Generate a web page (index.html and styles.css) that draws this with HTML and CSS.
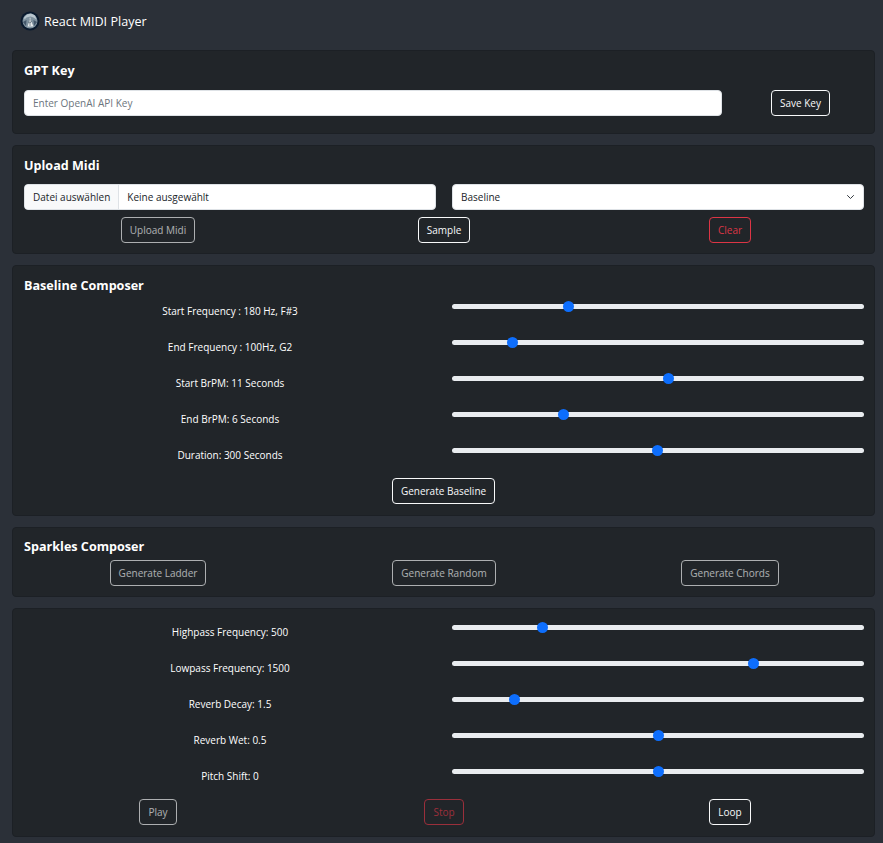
FILE: index.html
```html
<!DOCTYPE html>
<html lang="en">
<head>
    <meta charset="UTF-8">
    <title>React MIDI Player</title>
    <link rel="stylesheet" href="styles.css">
</head>
<body>
<nav class="navbar">
    <svg class="logo" width="20" height="20" viewBox="0 0 20 20">
        <circle cx="10" cy="10" r="9.500" fill="#0a1a2e"/>
        <circle cx="10" cy="10" r="7.500" fill="#7f929f"/>
        <path d="M4 6.500l3-3 4-1 4 2 1.500 4-3-2-3-1-4 1-2 2z" fill="#b9c6ce"/>
        <path d="M10 6l1.500 5 2 4.500h-6l1.500-4.500z" fill="#e6eaec"/>
        <path d="M3 11l3.500-2-.5 6zM17 11l-3.500-2 .5 6z" fill="#44576a"/>
        <path d="M10 8v7M8 11l2 1 2-2" stroke="#5c6d7a" stroke-width=".7" fill="none"/>
    </svg>
    <span>React MIDI Player</span>
</nav>
<main class="page">
    <section class="card">
        <h2>GPT Key</h2>
        <div class="key-row">
            <input class="field" type="text" placeholder="Enter OpenAI API Key">
            <button class="btn">Save Key</button>
        </div>
    </section>

    <section class="card upload">
        <h2>Upload Midi</h2>
        <div class="two-col">
            <div class="file-field">
                <span class="file-btn">Datei auswählen</span>
                <span class="file-name">Keine ausgewählt</span>
            </div>
            <select class="field select">
                <option>Baseline</option>
            </select>
        </div>
        <div class="actions spaced">
            <button class="btn muted">Upload Midi</button>
            <button class="btn">Sample</button>
            <button class="btn danger">Clear</button>
        </div>
    </section>

    <section class="card">
        <h2>Baseline Composer</h2>
        <div class="sliders">
            <div class="slider-row"><label>Start Frequency : 180 Hz, F#3</label><input type="range" min="0" max="1000" value="277"></div>
            <div class="slider-row"><label>End Frequency : 100Hz, G2</label><input type="range" min="0" max="1000" value="137"></div>
            <div class="slider-row"><label>Start BrPM: 11 Seconds</label><input type="range" min="0" max="1000" value="525"></div>
            <div class="slider-row"><label>End BrPM: 6 Seconds</label><input type="range" min="0" max="1000" value="265"></div>
            <div class="slider-row"><label>Duration: 300 Seconds</label><input type="range" min="0" max="1000" value="499"></div>
        </div>
        <div class="center-row"><button class="btn">Generate Baseline</button></div>
    </section>

    <section class="card sparkles">
        <h2>Sparkles Composer</h2>
        <div class="actions near">
            <button class="btn muted">Generate Ladder</button>
            <button class="btn muted">Generate Random</button>
            <button class="btn muted">Generate Chords</button>
        </div>
    </section>

    <section class="card player">
        <div class="sliders">
            <div class="slider-row"><label>Highpass Frequency: 500</label><input type="range" min="0" max="1000" value="212"></div>
            <div class="slider-row"><label>Lowpass Frequency: 1500</label><input type="range" min="0" max="1000" value="738"></div>
            <div class="slider-row"><label>Reverb Decay: 1.5</label><input type="range" min="0" max="1000" value="142"></div>
            <div class="slider-row"><label>Reverb Wet: 0.5</label><input type="range" min="0" max="1000" value="500"></div>
            <div class="slider-row"><label>Pitch Shift: 0</label><input type="range" min="0" max="1000" value="500"></div>
        </div>
        <div class="actions">
            <button class="btn muted">Play</button>
            <button class="btn danger off">Stop</button>
            <button class="btn">Loop</button>
        </div>
    </section>
</main>
</body>
</html>
```

FILE: styles.css
```css
*{
    box-sizing: border-box;
}
html, body{
    height: 843px;
    overflow: hidden;
}
body{
    margin: 0;
    background: #2b3038;
    color: #fff;
    font-family: "Open Sans", "Noto Sans", sans-serif;
    font-size: 10px;
}
.navbar{
    height: 42px;
    padding: 0 0 0 20px;
    display: flex;
    align-items: center;
    gap: 4px;
    font-size: 12.6px;
}
.page{
    margin: 8px 8px 0 12px;
    display: flex;
    flex-direction: column;
    gap: 11px;
}
.card{
    background: #212529;
    border: 1px solid #1c2025;
    border-radius: 4px;
    padding: 11px;
}
.card.upload{
    padding-bottom: 10px;
}
.card.sparkles{
    padding-bottom: 10px;
}
.card h2{
    margin: 0;
    padding-top: 1px;
    font-size: 12.6px;
    line-height: 16px;
    font-weight: 700;
}
.card.sparkles h2{
    padding-top: 0;
}
.key-row{
    display: flex;
    align-items: center;
    margin-top: 11px;
    padding-bottom: 6px;
}
.key-row .field{
    width: 698px;
}
.key-row .btn{
    margin-left: 49px;
}
.field{
    height: 26px;
    padding: 0 8px;
    border: 1px solid #dee2e6;
    border-radius: 4px;
    background: #fff;
    color: #212529;
    font: inherit;
    outline: none;
}
.field::placeholder{
    color: #6c757d;
}
.select{
    width: 100%;
    appearance: none;
    background-image: url("data:image/svg+xml,%3csvg xmlns='http://www.w3.org/2000/svg' viewBox='0 0 16 16'%3e%3cpath fill='none' stroke='%23343a40' stroke-linecap='round' stroke-linejoin='round' stroke-width='2' d='m2 5 6 6 6-6'/%3e%3c/svg%3e");
    background-repeat: no-repeat;
    background-position: right 8px center;
    background-size: 9px 8px;
}
.two-col{
    display: grid;
    grid-template-columns: 412px 412px;
    gap: 16px;
    margin-top: 10px;
}
.file-field{
    height: 26px;
    display: flex;
    align-items: center;
    background: #fff;
    color: #212529;
    border: 1px solid #dee2e6;
    border-radius: 4px;
    overflow: hidden;
}
.file-btn{
    height: 100%;
    display: flex;
    align-items: center;
    padding: 0 8px;
    background: #f8f9fa;
    border-right: 1px solid #dee2e6;
}
.file-name{
    padding-left: 8px;
}
.btn{
    height: 26px;
    padding: 0 8px;
    border: 1px solid #f8f9fa;
    border-radius: 4px;
    background: transparent;
    color: #f8f9fa;
    font: inherit;
}
.btn.muted{
    opacity: 0.65;
}
.btn.danger{
    border-color: #dc3545;
    color: #dc3545;
}
.btn.off{
    opacity: 0.65;
}
.actions{
    display: grid;
    grid-template-columns: repeat(3, 286px);
    justify-items: center;
    margin: 0 -9px;
}
.actions.spaced{
    margin-top: 7px;
}
.actions.near{
    margin-top: 5px;
}
.sliders{
    display: grid;
    gap: 3px;
    margin-top: 7px;
}
.slider-row{
    display: grid;
    grid-template-columns: 412px 412px;
    gap: 16px;
    height: 33px;
}
.slider-row label{
    padding-top: 2px;
    text-align: center;
    line-height: 16px;
}
.center-row{
    display: flex;
    justify-content: center;
}
.player .sliders{
    margin-top: 2px;
}
input[type=range]{
    -webkit-appearance: none;
    appearance: none;
    align-self: start;
    width: 412px;
    height: 11px;
    margin: 0;
    background: transparent;
}
input[type=range]::-webkit-slider-runnable-track{
    height: 5px;
    background: #e9ecef;
    border-radius: 3px;
}
input[type=range]::-webkit-slider-thumb{
    -webkit-appearance: none;
    width: 11px;
    height: 11px;
    margin-top: -3px;
    background: #0d6efd;
    border-radius: 50%;
}
```
